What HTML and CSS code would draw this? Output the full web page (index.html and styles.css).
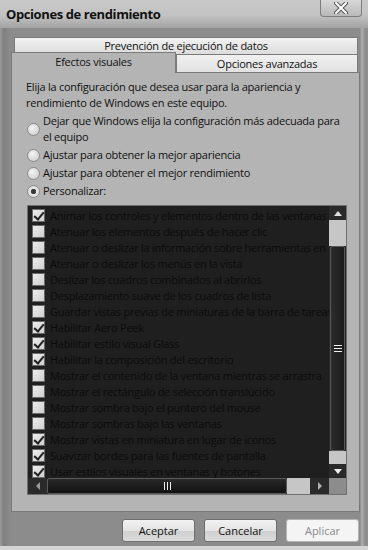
FILE: index.html
```html
<!DOCTYPE html>
<html lang="es">
<head>
    <meta charset="UTF-8">
    <meta name="viewport" content="width=device-width, initial-scale=1.0">
    <title>Opciones de rendimiento</title>
    <link rel="stylesheet" href="styles.css">
</head>
<body>
<div class="window">
    <div class="titlebar">
        <span class="title">Opciones de rendimiento</span>
        <div class="close">
            <svg width="16" height="12" viewBox="0 0 16 12"><path d="M3 1 L13 11 M13 1 L3 11" stroke="#555" stroke-width="4" stroke-linecap="round"/><path d="M3 1 L13 11 M13 1 L3 11" stroke="#fff" stroke-width="2" stroke-linecap="round"/></svg>
        </div>
    </div>
    <div class="frame">
        <div class="tabs">
            <div class="tab tab-top">Prevención de ejecución de datos</div>
            <div class="tab-row">
                <div class="tab tab-sel">Efectos visuales</div>
                <div class="tab tab-other">Opciones avanzadas</div>
            </div>
        </div>
        <div class="panel">
            <p class="intro">Elija la configuración que desea usar para la apariencia y rendimiento de Windows en este equipo.</p>
            <div class="radios">
                <label class="radio"><span class="dot"></span><span>Dejar que Windows elija la configuración más adecuada para el equipo</span></label>
                <label class="radio"><span class="dot"></span><span>Ajustar para obtener la mejor apariencia</span></label>
                <label class="radio"><span class="dot"></span><span>Ajustar para obtener el mejor rendimiento</span></label>
                <label class="radio on"><span class="dot"></span><span>Personalizar:</span></label>
            </div>
            <div class="listbox">
                <ul class="items">
                    <li class="checked"><span class="box"></span>Animar los controles y elementos dentro de las ventanas</li>
                    <li><span class="box"></span>Atenuar los elementos después de hacer clic</li>
                    <li><span class="box"></span>Atenuar o deslizar la información sobre herramientas en la vista</li>
                    <li><span class="box"></span>Atenuar o deslizar los menús en la vista</li>
                    <li><span class="box"></span>Deslizar los cuadros combinados al abrirlos</li>
                    <li><span class="box"></span>Desplazamiento suave de los cuadros de lista</li>
                    <li><span class="box"></span>Guardar vistas previas de miniaturas de la barra de tareas</li>
                    <li class="checked"><span class="box"></span>Habilitar Aero Peek</li>
                    <li class="checked"><span class="box"></span>Habilitar estilo visual Glass</li>
                    <li class="checked"><span class="box"></span>Habilitar la composición del escritorio</li>
                    <li><span class="box"></span>Mostrar el contenido de la ventana mientras se arrastra</li>
                    <li><span class="box"></span>Mostrar el rectángulo de selección translúcido</li>
                    <li><span class="box"></span>Mostrar sombra bajo el puntero del mouse</li>
                    <li><span class="box"></span>Mostrar sombras bajo las ventanas</li>
                    <li class="checked"><span class="box"></span>Mostrar vistas en miniatura en lugar de iconos</li>
                    <li class="checked"><span class="box"></span>Suavizar bordes para las fuentes de pantalla</li>
                    <li class="checked"><span class="box"></span>Usar estilos visuales en ventanas y botones</li>
                </ul>
                <div class="vscroll">
                    <div class="sbtn"><svg width="10" height="8" viewBox="0 0 10 8"><path d="M1 7 L5 2 L9 7 Z" fill="#e0e0e0"/></svg></div>
                    <div class="track t1"></div>
                    <div class="thumb-v"><span class="grip-v"></span></div>
                    <div class="track t2"></div>
                    <div class="sbtn"><svg width="10" height="8" viewBox="0 0 10 8"><path d="M1 2 L9 2 L5 7 Z" fill="#f0f0f0"/></svg></div>
                </div>
                <div class="hscroll">
                    <div class="sbtn hb"><svg width="8" height="10" viewBox="0 0 8 10"><path d="M6 1 L6 9 L2 5 Z" fill="#9a9a9a"/></svg></div>
                    <div class="thumb-h"><span class="grip-h"></span></div>
                    <div class="track t3"></div>
                    <div class="sbtn hb"><svg width="8" height="10" viewBox="0 0 8 10"><path d="M2 1 L2 9 L6 5 Z" fill="#b0b0b0"/></svg></div>
                </div>
                <div class="corner"></div>
            </div>
        </div>
        <div class="buttons">
            <button class="btn">Aceptar</button>
            <button class="btn">Cancelar</button>
            <button class="btn disabled">Aplicar</button>
        </div>
    </div>
</div>
</body>
</html>
```

FILE: styles.css
```css
* {
    box-sizing: border-box;
}
body {
    margin: 0;
    font-family: "Open Sans", "Noto Sans", sans-serif;
    font-size: 11px;
    letter-spacing: -0.25px;
    color: #111;
    background: #8c8c8c;
}
.window {
    width: 368px;
    height: 550px;
    overflow: hidden;
    display: flex;
    flex-direction: column;
}
.titlebar {
    height: 28px;
    flex: none;
    display: flex;
    justify-content: space-between;
    background: linear-gradient(180deg, #c9c9c9 0%, #c2c2c2 55%, #a3a3a3 100%);
}
.title {
    font-weight: bold;
    font-size: 13px;
    letter-spacing: -0.4px;
    padding: 5px 0 0 6px;
    color: #111;
}
.close {
    width: 42px;
    height: 17px;
    margin-right: 6px;
    border: 1px solid #7d7d7d;
    border-top: none;
    border-radius: 0 0 4px 4px;
    background: linear-gradient(180deg, #d8d8d8, #b9b9b9);
    display: flex;
    align-items: center;
    justify-content: center;
}
.frame {
    flex: 1;
    display: flex;
    flex-direction: column;
    padding: 9px 8px 0 11px;
    background: linear-gradient(90deg, #9a9a9a 0, #7f7f7f 4px, #8c8c8c 10px, #8c8c8c 360px, #b0b0b0 362px, #8e8e8e 365px);
    border-bottom: 4px solid #d4d4d4;
}
.tabs {
    display: flex;
    flex-direction: column;
}
.tab {
    text-align: center;
    border: 1px solid #7a7a7a;
    border-bottom: none;
}
.tab-top {
    margin: 0 2px 0 3px;
    height: 17px;
    line-height: 16px;
    background: linear-gradient(180deg, #f2f2f2, #dcdcdc);
}
.tab-row {
    display: flex;
    align-items: flex-end;
    margin-top: -2px;
}
.tab-sel {
    width: 165px;
    height: 21px;
    line-height: 18px;
    background: #b4b4b4;
    position: relative;
    z-index: 1;
    margin-bottom: -1px;
}
.tab-other {
    flex: 1;
    height: 18px;
    line-height: 18px;
    margin-right: 2px;
    background: linear-gradient(180deg, #f0f0f0, #e2e2e2);
}
.panel {
    background: #b4b4b4;
    border: 1px solid #7a7a7a;
    height: 440px;
    padding: 6px 14px 0 14px;
    display: flex;
    flex-direction: column;
}
.intro {
    margin: 0;
    line-height: 16px;
}
.radios {
    margin-top: 2px;
    display: flex;
    flex-direction: column;
    gap: 2px;
}
.radio {
    display: flex;
    align-items: center;
    gap: 3px;
    line-height: 16px;
}
.radio .dot {
    flex: none;
    width: 13px;
    height: 13px;
    border: 1px solid #8a8a8a;
    border-radius: 50%;
    background: radial-gradient(circle at 40% 35%, #f4f4f4, #c8c8c8);
    margin-left: 1px;
}
.radio.on .dot {
    background: radial-gradient(circle, #333 0, #444 2.5px, #e8e8e8 3px, #cfcfcf 100%);
}
.listbox {
    margin-top: 6px;
    margin-left: 1px;
    width: 320px;
    height: 290px;
    border: 1px solid #6f6f6f;
    background: #1f1f1f;
    display: grid;
    grid-template-columns: 301px 17px;
    grid-template-rows: 272px 16px;
}
.items {
    list-style: none;
    margin: 0;
    padding: 1px 0 0 4px;
    overflow: hidden;
}
.items li {
    height: 16px;
    display: flex;
    align-items: center;
    gap: 5px;
    white-space: nowrap;
    color: #0b0b0b;
}
.box {
    flex: none;
    width: 13px;
    height: 13px;
    border: 1px solid #6a6a6a;
    background: linear-gradient(135deg, #ececec, #cfcfcf);
    position: relative;
}
.checked .box::after {
    content: "";
    position: absolute;
    left: 3px;
    top: 0;
    width: 4px;
    height: 8px;
    border: solid #222;
    border-width: 0 2px 2px 0;
    transform: rotate(40deg);
}
.vscroll {
    display: flex;
    flex-direction: column;
    background: #262626;
}
.sbtn {
    height: 14px;
    flex: none;
    display: flex;
    align-items: center;
    justify-content: center;
    background: #2a2a2a;
}
.track {
    background: #c6c6c6;
}
.t1 { height: 26px; }
.t2 { height: 13px; }
.thumb-v {
    flex: 1;
    margin: 0 1px;
    border: 1px solid #5a5a5a;
    border-radius: 2px;
    background: linear-gradient(90deg, #2d2d2d, #1b1b1b);
    display: flex;
    align-items: center;
    justify-content: center;
}
.grip-v {
    width: 8px;
    height: 7px;
    background: repeating-linear-gradient(180deg, #f0f0f0 0 1px, transparent 1px 3px);
}
.hscroll {
    display: flex;
    background: #262626;
}
.hb {
    width: 19px;
    height: 16px;
}
.thumb-h {
    width: 240px;
    border: 1px solid #5a5a5a;
    border-radius: 2px;
    background: linear-gradient(180deg, #2a2a2a, #111);
    display: flex;
    align-items: center;
    justify-content: center;
}
.grip-h {
    width: 7px;
    height: 8px;
    background: repeating-linear-gradient(90deg, #f0f0f0 0 1px, transparent 1px 3px);
}
.t3 {
    flex: 1;
}
.corner {
    background: #8c8c8c;
}
.buttons {
    display: flex;
    justify-content: flex-end;
    gap: 9px;
    margin-top: 7px;
    padding-right: 1px;
}
.btn {
    width: 73px;
    height: 23px;
    border: 1px solid #6e6e6e;
    border-radius: 3px;
    background: linear-gradient(180deg, #f2f2f2 0%, #e4e4e4 50%, #cfcfcf 51%, #dcdcdc 100%);
    font-family: "Open Sans", "Noto Sans", sans-serif;
    font-size: 11px;
    color: #111;
    padding: 0;
}
.btn.disabled {
    background: #f4f4f4;
    border-color: #b4b4b4;
    color: #8a8a8a;
}
```
